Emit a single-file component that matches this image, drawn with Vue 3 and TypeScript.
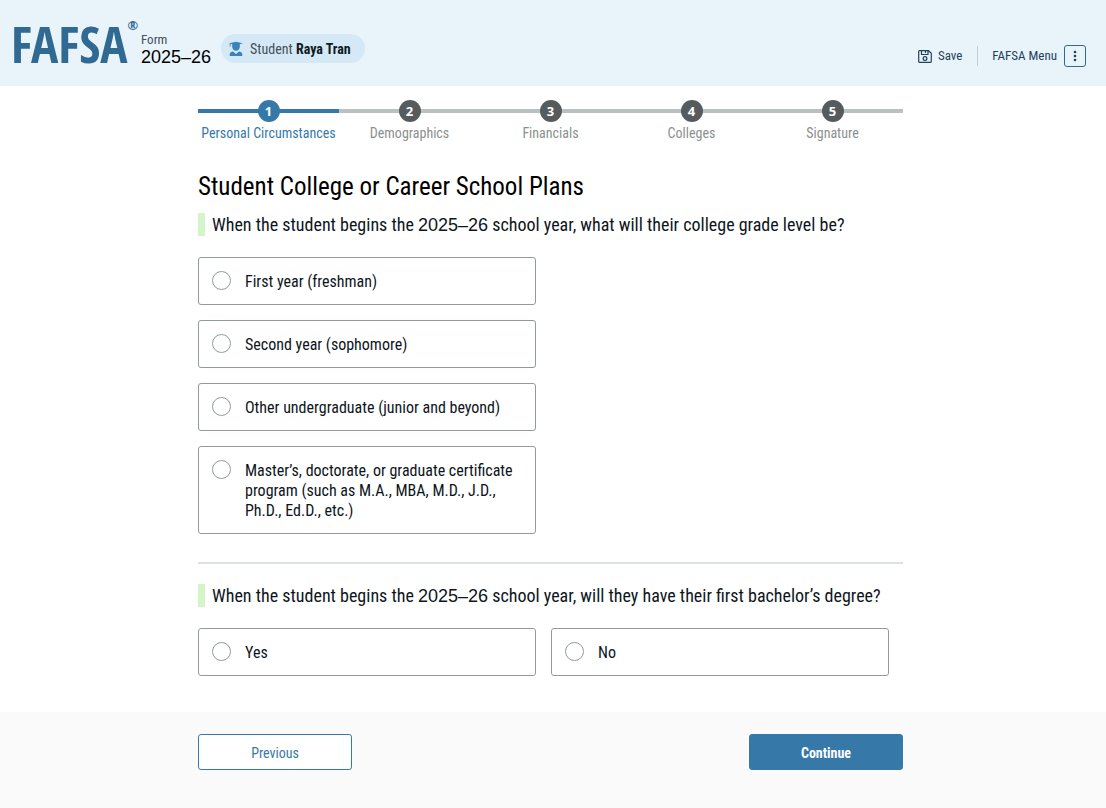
<script setup lang="ts">
import { ref } from 'vue'

interface Option {
  value: string
  label: string
}

const steps: string[] = ['Personal Circumstances', 'Demographics', 'Financials', 'Colleges', 'Signature']
const currentStep = ref(0)

const gradeLevels: Option[] = [
  { value: 'first', label: 'First year (freshman)' },
  { value: 'second', label: 'Second year (sophomore)' },
  { value: 'other', label: 'Other undergraduate (junior and beyond)' },
  { value: 'graduate', label: 'Master’s, doctorate, or graduate certificate program (such as M.A., MBA, M.D., J.D., Ph.D., Ed.D., etc.)' },
]
const degreeAnswers: Option[] = [
  { value: 'yes', label: 'Yes' },
  { value: 'no', label: 'No' },
]

const gradeLevel = ref('')
const hasDegree = ref('')
</script>

<template>
  <div class="page">
    <header class="header">
      <div class="brand">
        <a class="logo" href="#">FAFSA<sup>®</sup></a>
        <div class="form-year">
          <span class="form-word">Form</span>
          <span class="year">2025–26</span>
        </div>
        <div class="role">
          <svg class="role-icon" viewBox="0 0 14 16" aria-hidden="true">
            <path d="M.3 2.300 7 .8l6.700 1.500-2.900.9v2.600C10.800 8.200 9.300 9.700 7 9.700S3.200 8.200 3.200 5.800V3.200L1.600 2.800v2.700H.7V2.400z" />
            <path d="M.7 15v-1.500c0-1.700 1.300-2.700 3.300-2.900l3 2.400 3-2.400c2 .2 3.300 1.200 3.300 2.900V15z" />
          </svg>
          <span>Student <b>Raya Tran</b></span>
        </div>
      </div>
      <nav class="tools">
        <button class="save" type="button">
          <svg class="save-icon" viewBox="0 0 14 13" aria-hidden="true">
            <path d="M1.500.700h9l2.800 2.600v8.200a.8.8 0 0 1-.8.800h-11a.8.8 0 0 1-.8-.8v-10a.8.8 0 0 1 .8-.8z" />
            <path d="M3.500.700v3.800h6.500V.700M7.500 1v2" />
            <circle cx="7" cy="8.500" r="1.900" />
          </svg>
          Save
        </button>
        <button class="menu" type="button">
          FAFSA Menu
          <span class="menu-box">
            <svg viewBox="0 0 4 12" aria-hidden="true">
              <circle cx="2" cy="2" r="1.300" /><circle cx="2" cy="6" r="1.300" /><circle cx="2" cy="10" r="1.300" />
            </svg>
          </span>
        </button>
      </nav>
    </header>

    <main class="content">
      <ol class="steps">
        <li v-for="(step, i) in steps" :key="step" class="step" :class="{ current: i === currentStep }">
          <div class="track"><span class="dot">{{ i + 1 }}</span></div>
          <span class="step-label">{{ step }}</span>
        </li>
      </ol>

      <h1>Student College or Career School Plans</h1>

      <fieldset class="question">
        <legend>When the student begins the <span class="num">2025–26</span> school year, what will their college grade level be?</legend>
        <div class="options stacked">
          <label v-for="o in gradeLevels" :key="o.value" class="option">
            <input v-model="gradeLevel" type="radio" name="grade" :value="o.value" />
            <span>{{ o.label }}</span>
          </label>
        </div>
      </fieldset>

      <hr />

      <fieldset class="question">
        <legend>When the student begins the <span class="num">2025–26</span> school year, will they have their first bachelor’s degree?</legend>
        <div class="options">
          <label v-for="o in degreeAnswers" :key="o.value" class="option">
            <input v-model="hasDegree" type="radio" name="degree" :value="o.value" />
            <span>{{ o.label }}</span>
          </label>
        </div>
      </fieldset>
    </main>

    <footer class="footer">
      <div class="actions">
        <button class="btn outline" type="button">Previous</button>
        <button class="btn solid" type="button">Continue</button>
      </div>
    </footer>
  </div>
</template>

<style>
body {
  margin: 0;
}
</style>

<style scoped>
* {
  box-sizing: border-box;
}
.page {
  min-height: 100vh;
  display: flex;
  flex-direction: column;
  background: #fff;
  color: #0d151b;
  font-family: "Roboto Condensed", "Liberation Sans Narrow", Roboto, sans-serif;
  font-size: 16px;
  line-height: 20px;
}
button {
  font: inherit;
  cursor: pointer;
}
.header {
  display: flex;
  justify-content: space-between;
  min-height: 86px;
  padding: 0 20px 0 11px;
  background: #e8f3fa;
}
.brand {
  display: flex;
  align-items: flex-start;
}
.logo {
  display: flex;
  width: 124px;
  margin-top: 15px;
  color: #306a92;
  font-family: "Open Sans Condensed", "Roboto Condensed", sans-serif;
  font-size: 51px;
  font-weight: 800;
  line-height: 56px;
  text-decoration: none;
}
.logo sup {
  font-size: 13px;
  font-weight: 400;
  line-height: 20px;
}
.form-year {
  display: flex;
  flex-direction: column;
  margin: 31px 10px 0 6px;
}
.form-word {
  color: #44505a;
  font-size: 13px;
  line-height: 17px;
}
.year {
  color: #000;
  font: 18px/18px "Liberation Sans", Arial, sans-serif;
}
.role {
  display: flex;
  align-items: center;
  gap: 7px;
  height: 29px;
  margin-top: 34px;
  padding: 0 14px 0 8px;
  border-radius: 15px;
  background: #d4e9f5;
  color: #44505a;
  font-size: 14px;
}
.role b {
  color: #111b22;
}
.role-icon {
  width: 14px;
  height: 16px;
  fill: #3a83b7;
}
.tools {
  display: flex;
  align-items: center;
  height: 24px;
  margin-top: 44px;
}
.save,
.menu {
  display: flex;
  align-items: center;
  padding: 0;
  border: 0;
  background: none;
  color: #1f435c;
  font-size: 13px;
}
.save {
  gap: 6px;
  padding-right: 15px;
  border-right: 1px solid #c3ccce;
}
.save-icon {
  width: 14px;
  height: 13px;
  fill: none;
  stroke: #1f435c;
  stroke-width: 1.2;
}
.menu {
  gap: 7px;
  padding-left: 14px;
}
.menu-box {
  display: flex;
  align-items: center;
  justify-content: center;
  width: 22px;
  height: 22px;
  border: 1px solid #306a92;
  border-radius: 3px;
}
.menu-box svg {
  width: 4px;
  height: 12px;
  fill: #1f435c;
}
.content,
.footer {
  padding-right: 21px;
  padding-left: 16px;
}
.content > *,
.actions {
  max-width: 705px;
  margin-right: auto;
  margin-left: auto;
}
.content {
  flex: 1;
  padding-top: 14px;
  padding-bottom: 32px;
}
.steps {
  display: flex;
  margin-top: 0;
  margin-bottom: 30px;
  padding: 0;
  list-style: none;
}
.step {
  flex: 1;
  color: #8b908d;
  font-size: 14px;
  text-align: center;
}
.track {
  display: flex;
  justify-content: center;
  height: 22px;
  margin-bottom: 1px;
  background: linear-gradient(#bbc1c0, #bbc1c0) center / 100% 4px no-repeat;
}
.dot {
  width: 22px;
  border-radius: 50%;
  background: #565c5e;
  color: #fff;
  font: bold 13px/22px "Open Sans", sans-serif;
}
.current {
  color: #3679a8;
}
.current .track {
  background-image: linear-gradient(#3679a8, #3679a8);
}
.current .dot {
  background: #3679a8;
}
h1 {
  margin-top: 0;
  margin-bottom: 12px;
  color: #000;
  font-size: 25px;
  font-weight: 400;
  line-height: 28px;
}
.question {
  min-width: 0;
  padding: 0;
  border: 0;
}
legend {
  padding: 1px 0 0 7px;
  border-left: 7px solid #d3f5c8;
  font-size: 18px;
  line-height: 21px;
}
.num {
  font-family: "Liberation Sans", Arial, sans-serif;
}
.options {
  display: grid;
  grid-template-columns: 1fr 1fr;
  gap: 15px;
  margin-top: 21px;
  margin-right: 14px;
}
.stacked .option {
  grid-column: 1;
}
.option {
  display: flex;
  gap: 14px;
  padding: 13px 13px 12px;
  border: 1px solid #929a9a;
  border-radius: 3px;
}
.option span {
  padding-top: 1px;
}
.option input {
  appearance: none;
  flex: none;
  width: 19px;
  height: 19px;
  margin: 0;
  border: 1px solid #929a9a;
  border-radius: 50%;
  background: #fff;
}
.option input:checked {
  border: 5px solid #3679a8;
}
hr {
  height: 2px;
  margin-top: 28px;
  margin-bottom: 20px;
  border: 0;
  background: #dce1e1;
}
.footer {
  padding-top: 22px;
  padding-bottom: 38px;
  background: #fafafa;
}
.actions {
  display: flex;
  justify-content: space-between;
}
.btn {
  width: 154px;
  height: 36px;
  padding: 1px 0 0;
  border: 1px solid #3679a8;
  border-radius: 3px;
  font-size: 14px;
}
.outline {
  background: #fff;
  color: #3679a8;
}
.solid {
  background: #3679a8;
  color: #fff;
  font-weight: 700;
}
</style>
